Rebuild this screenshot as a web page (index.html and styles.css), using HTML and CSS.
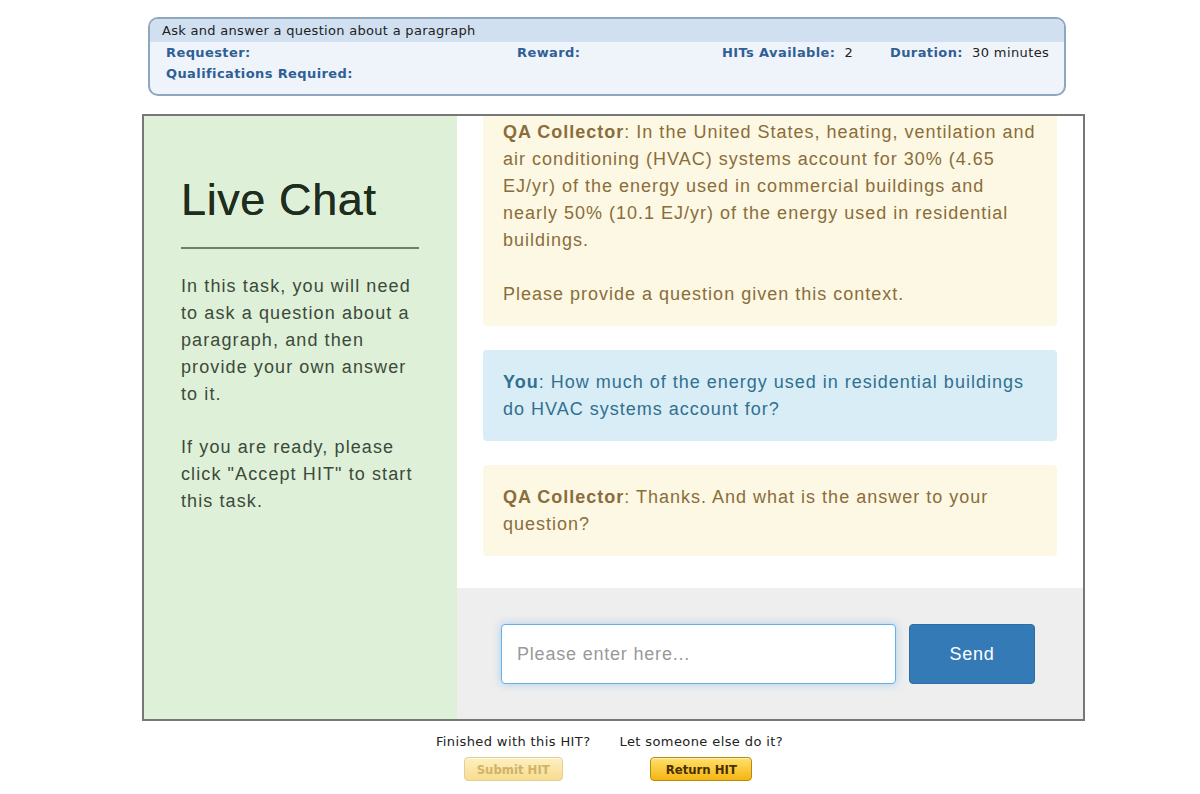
FILE: index.html
```html
<!DOCTYPE html>
<html lang="en">
<head>
    <meta charset="UTF-8">
    <meta name="viewport" content="width=device-width, initial-scale=1.0">
    <title>Live Chat HIT</title>
    <link rel="stylesheet" href="styles.css">
</head>
<body>
    <div class="page">
        <!-- HIT summary -->
        <div class="hit-header">
            <div class="hit-title">Ask and answer a question about a paragraph</div>
            <div class="hit-row">
                <div class="col col-requester"><span class="label">Requester:</span></div>
                <div class="col col-reward"><span class="label">Reward:</span></div>
                <div class="col col-hits"><span class="label">HITs Available:</span>&nbsp; 2</div>
                <div class="col"><span class="label">Duration:</span>&nbsp; 30 minutes</div>
            </div>
            <div class="hit-row">
                <div class="col"><span class="label">Qualifications Required:</span></div>
            </div>
        </div>

        <!-- Chat task -->
        <div class="task">
            <div class="task-info">
                <h1>Live Chat</h1>
                <hr>
                <p>In this task, you will need to ask a question about a paragraph, and then provide your own answer to it.</p>
                <p>If you are ready, please click "Accept HIT" to start this task.</p>
            </div>
            <div class="chat">
                <div class="messages">
                    <div class="message message-bot">
                        <p><b>QA Collector</b>: In the United States, heating, ventilation and air conditioning (HVAC) systems account for 30% (4.65 EJ/yr) of the energy used in commercial buildings and nearly 50% (10.1 EJ/yr) of the energy used in residential buildings.</p>
                        <p>Please provide a question given this context.</p>
                    </div>
                    <div class="message message-you">
                        <p><b>You</b>: How much of the energy used in residential buildings do HVAC systems account for?</p>
                    </div>
                    <div class="message message-bot">
                        <p><b>QA Collector</b>: Thanks. And what is the answer to your question?</p>
                    </div>
                </div>
                <div class="composer">
                    <input type="text" class="chat-input" placeholder="Please enter here...">
                    <button class="send-btn">Send</button>
                </div>
            </div>
        </div>

        <!-- HIT controls -->
        <div class="hit-footer">
            <div class="footer-col">
                <div class="footer-text">Finished with this HIT?</div>
                <button class="hit-btn hit-btn-disabled">Submit HIT</button>
            </div>
            <div class="footer-col">
                <div class="footer-text">Let someone else do it?</div>
                <button class="hit-btn">Return HIT</button>
            </div>
        </div>
    </div>
</body>
</html>
```

FILE: styles.css
```css
/* Basic Styling */
body {
    margin: 0;
    background-color: #fff;
    font-family: "Liberation Sans", Arial, sans-serif;
}

.page {
    width: 943px;
    margin-left: 142px;
    padding-top: 17px;
}

/* HIT header box */
.hit-header {
    width: 914px;
    margin-left: 6px;
    border: 2px solid #8fa6bf;
    border-radius: 10px;
    background-color: #eff4fa;
    font-family: "DejaVu Sans", Verdana, sans-serif;
    font-size: 13px;
    letter-spacing: 0.4px;
    color: #222;
    overflow: hidden;
    padding-bottom: 10px;
}

.hit-title {
    background-color: #d0e0f0;
    padding: 3px 12px 2px;
    height: 18px;
    line-height: 18px;
    letter-spacing: 0.3px;
}

.hit-row {
    display: flex;
    padding-left: 16px;
    height: 21px;
    line-height: 21px;
}

.col-requester { width: 351px; }
.col-reward { width: 205px; }
.col-hits { width: 168px; }

.label {
    font-weight: bold;
    color: #2f5f97;
}

/* Task box */
.task {
    display: flex;
    margin-top: 18px;
    height: 603px;
    border: 2px solid #777;
}

.task-info {
    width: 238px;
    padding: 0 38px 0 37px;
    background-color: #dff0d8;
    color: #3b4a3b;
    font-size: 18px;
    letter-spacing: 1.1px;
    line-height: 27px;
}

.task-info h1 {
    margin: 58px 0 0;
    font-size: 45px;
    font-weight: normal;
    letter-spacing: 0.6px;
    line-height: 52px;
    color: #1f2d1f;
    text-shadow: 0 0 0.6px #1f2d1f;
}

.task-info hr {
    margin: 21px 0 24px;
    border: none;
    border-top: 2px solid #6f7f6f;
}

.task-info p {
    margin: 0 0 26px;
}

/* Chat */
.chat {
    flex: 1;
    display: flex;
    flex-direction: column;
}

.messages {
    height: 472px;
    overflow: hidden;
    display: flex;
    flex-direction: column;
    justify-content: flex-end;
    gap: 24px;
    padding: 0 26px 32px;
    box-sizing: border-box;
}

.message {
    flex-shrink: 0;
    padding: 19px 20px 18px;
    border-radius: 4px;
    font-size: 18px;
    letter-spacing: 1px;
    line-height: 27px;
}

.message p {
    margin: 0;
}

.message p + p {
    margin-top: 27px;
}

.message-bot {
    background-color: #fcf8e3;
    color: #8a6d3b;
}

.message-you {
    background-color: #d9edf7;
    color: #31708f;
}

.composer {
    flex: 1;
    display: flex;
    gap: 13px;
    padding: 36px 0 0 44px;
    background-color: #eee;
}

.chat-input {
    width: 395px;
    height: 60px;
    box-sizing: border-box;
    padding: 0 15px;
    border: 1px solid #66afe9;
    border-radius: 4px;
    box-shadow: 0 0 8px rgba(102, 175, 233, 0.5);
    font-family: "Liberation Sans", Arial, sans-serif;
    font-size: 18px;
    letter-spacing: 0.8px;
    color: #555;
    outline: none;
}

.chat-input::placeholder {
    color: #999;
}

.send-btn {
    width: 126px;
    height: 60px;
    border: 1px solid #2e6da4;
    border-radius: 4px;
    background-color: #337ab7;
    color: #fff;
    font-family: "Liberation Sans", Arial, sans-serif;
    font-size: 18px;
    letter-spacing: 0.8px;
}

/* HIT footer */
.hit-footer {
    display: flex;
    justify-content: center;
    gap: 29px;
    padding: 14px 8px 0 0;
    font-family: "DejaVu Sans", Verdana, sans-serif;
    font-size: 13px;
    letter-spacing: 0.4px;
    color: #222;
}

.footer-col {
    display: flex;
    flex-direction: column;
    align-items: center;
}

.footer-text {
    line-height: 14px;
}

.hit-btn {
    margin-top: 8px;
    width: 102px;
    height: 24px;
    border: 1px solid #b68a10;
    border-radius: 4px;
    background: linear-gradient(#ffe06a, #f5b512);
    box-shadow: inset 0 1px 0 rgba(255, 255, 255, 0.6);
    font-family: "DejaVu Sans Condensed", "DejaVu Sans", sans-serif;
    font-size: 13px;
    font-weight: bold;
    color: #4a3000;
}

.hit-btn-disabled {
    width: 99px;
    border-color: #e2cf95;
    background: linear-gradient(#fdf0c0, #f6dc8e);
    color: #d2b266;
}
```
